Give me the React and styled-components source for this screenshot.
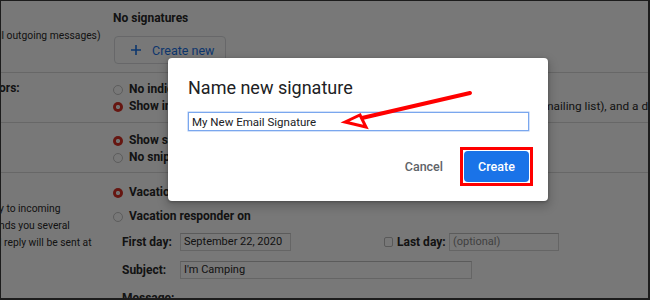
import styled, { createGlobalStyle } from 'styled-components';

const GlobalStyle = createGlobalStyle`
  html, body {
    margin: 0;
    padding: 0;
    background: #fff;
  }
  body {
    font-family: Roboto, "Liberation Sans", Arial, sans-serif;
    overflow: hidden;
  }
`;

const Frame = styled.div`
  position: relative;
  width: 650px;
  height: 300px;
  box-sizing: border-box;
  border-style: solid;
  border-color: #1c1c1c;
  border-width: 1px 2px 2px 1px;
  overflow: hidden;
  background: #fff;
  color: #2a2a2a;
  font-size: 12px;
`;

// ---- settings page behind the modal ----

const Row = styled.section`
  display: grid;
  grid-template-columns: 112px 1fr;
  padding: ${p => p.$pad};
  border-bottom: ${p => (p.$last ? 'none' : '1px solid #dadada')};
`;

const LabelCol = styled.div`
  display: flex;
  flex-direction: column;
  margin: ${p => p.$shift || 0}px 0 0 -2px;
  line-height: 17px;
  white-space: nowrap;
  overflow: visible;
`;

const LabelLine = styled.span`
  min-height: 17px;
  font-size: ${p => (p.$bold ? 12 : 10.3)}px;
  font-weight: ${p => (p.$bold ? 700 : 400)};
`;

const Content = styled.div`
  display: flex;
  flex-direction: column;
  align-items: flex-start;
  min-width: 0;
  line-height: 17px;
  white-space: nowrap;
`;

const Heading = styled.div`
  font-weight: 700;
`;

const CreateNew = styled.button`
  display: inline-flex;
  align-items: center;
  gap: 11px;
  box-sizing: border-box;
  width: 112px;
  height: 28px;
  margin: 9px 0 0 1px;
  padding: 0 0 0 16px;
  border: 1px solid #dadce0;
  border-radius: 4px;
  background: #fff;
  color: #1a73e8;
  font-family: Roboto, "Liberation Sans", Arial, sans-serif;
  font-size: 12.5px;
`;

const Option = styled.div`
  display: flex;
  align-items: center;
  gap: 6px;
  margin-top: ${p => p.$gap || 0}px;
`;

const Radio = styled.span`
  box-sizing: border-box;
  width: 10px;
  height: 10px;
  border-radius: 50%;
  border: ${p => (p.$checked ? 'none' : '1px solid #c4c4c4')};
  background: ${p =>
    p.$checked
      ? 'radial-gradient(circle, #f2f2f2 0 1.8px, #d93025 2.4px)'
      : '#fff'};
`;

const Describe = styled.span`
  font-size: 11.8px;
`;

const Strong = styled.b`
  font-size: 12px;
  font-weight: 700;
`;

const Form = styled.div`
  display: flex;
  flex-direction: column;
  gap: 10px;
  margin: 8px 0 0 9px;
`;

const FormRow = styled.div`
  display: flex;
  align-items: center;
  height: 18px;
`;

const FieldLabel = styled.span`
  width: ${p => p.$w || 58}px;
  margin-left: ${p => p.$ml || 0}px;
  font-weight: 700;
`;

const Field = styled.div`
  box-sizing: border-box;
  width: ${p => p.$w}px;
  height: 18px;
  padding: 0 3px;
  border: 1px solid #d6d6d6;
  border-top-color: #c2c2c2;
  font-size: 11px;
  line-height: 16px;
  color: ${p => (p.$muted ? '#8a8a8a' : '#2a2a2a')};
`;

const Checkbox = styled.span`
  box-sizing: border-box;
  width: 9px;
  height: 10px;
  margin-left: 93px;
  border: 1px solid #bdbdbd;
  border-radius: 2px;
  background: #fff;
`;

const Scrim = styled.div`
  position: absolute;
  inset: 0;
  background: rgba(0, 0, 0, 0.53);
`;

// ---- modal ----

const Dialog = styled.div`
  position: absolute;
  left: 167px;
  top: 57px;
  width: 380px;
  box-sizing: border-box;
  padding: 18px 19px 19px 20px;
  background: #fff;
  border-radius: 4px;
  box-shadow: 0 1px 3px rgba(0, 0, 0, 0.3), 0 4px 8px 3px rgba(0, 0, 0, 0.15);
`;

const Title = styled.h2`
  margin: 0 0 12px;
  font-size: 18px;
  line-height: 24px;
  font-weight: 400;
  color: #202124;
`;

const NameInput = styled.input`
  display: block;
  box-sizing: border-box;
  width: 100%;
  height: 19px;
  margin: 0;
  padding: 0 3px;
  border: 1px solid #7aa7ee;
  box-shadow: 0 0 0 0.5px #a9c6f4;
  border-radius: 0;
  outline: none;
  font-family: Roboto, "Liberation Sans", Arial, sans-serif;
  font-size: 11.5px;
  color: #202124;
`;

const Actions = styled.div`
  display: flex;
  justify-content: flex-end;
  align-items: center;
  gap: 13px;
  margin-top: 20px;
`;

const TextButton = styled.button`
  height: 31px;
  padding: 0 8px;
  border: none;
  background: transparent;
  color: #5f6368;
  font-family: Roboto, "Liberation Sans", Arial, sans-serif;
  font-size: 12.5px;
  font-weight: 500;
`;

const Marked = styled.span`
  position: relative;
  display: inline-flex;

  &::after {
    content: '';
    position: absolute;
    inset: -4px;
    border: 3px solid #ff0000;
  }
`;

const PrimaryButton = styled.button`
  width: 65px;
  height: 31px;
  padding: 0;
  border: none;
  border-radius: 4px;
  background: #1a73e8;
  color: #fff;
  font-family: Roboto, "Liberation Sans", Arial, sans-serif;
  font-size: 12.5px;
  font-weight: 500;
`;

const Overlay = styled.svg`
  position: absolute;
  left: 0;
  top: 0;
  pointer-events: none;
`;

const PlusIcon = () => (
  <svg width="10" height="10" viewBox="0 0 10 10">
    <path d="M5 0v10M0 5h10" stroke="currentColor" strokeWidth="1.6" fill="none" />
  </svg>
);

export default function App() {
  return (
    <Frame>
      <GlobalStyle />

      <Row $pad="9px 0 8px">
        <LabelCol>
          <LabelLine $bold>&nbsp;</LabelLine>
          <LabelLine>ll outgoing messages)</LabelLine>
        </LabelCol>
        <Content>
          <Heading>No signatures</Heading>
          <CreateNew>
            <PlusIcon />
            Create new
          </CreateNew>
        </Content>
      </Row>

      <Row $pad="8px 0 7px">
        <LabelCol $shift={-1}>
          <LabelLine $bold>ors:</LabelLine>
        </LabelCol>
        <Content>
          <Option>
            <Radio />
            <Strong>No indicators</Strong>
          </Option>
          <Option>
            <Radio $checked />
            <Describe>
              <Strong>Show indicators</Strong> - Display an arrow ( › ) by messages sent to my address (not a mailing list), and a double arrow ( » ) by messages sent only to me.
            </Describe>
          </Option>
        </Content>
      </Row>

      <Row $pad="9px 0 6px">
        <LabelCol />
        <Content>
          <Option>
            <Radio $checked />
            <Describe>
              <Strong>Show snippets</Strong> - Show snippets of the message (like Google web search!).
            </Describe>
          </Option>
          <Option>
            <Radio />
            <Describe>
              <Strong>No snippets</Strong> - Show subject only.
            </Describe>
          </Option>
        </Content>
      </Row>

      <Row $pad="11px 0 0" $last>
        <LabelCol $shift={-1}>
          <LabelLine $bold>&nbsp;</LabelLine>
          <LabelLine>y to incoming</LabelLine>
          <LabelLine>nds you several</LabelLine>
          <LabelLine>l reply will be sent at</LabelLine>
        </LabelCol>
        <Content>
          <Option>
            <Radio $checked />
            <Strong>Vacation responder off</Strong>
          </Option>
          <Option $gap={7}>
            <Radio />
            <Strong>Vacation responder on</Strong>
          </Option>
          <Form>
            <FormRow>
              <FieldLabel>First day:</FieldLabel>
              <Field $w={111}>September 22, 2020</Field>
              <Checkbox />
              <FieldLabel $w={52} $ml={4}>Last day:</FieldLabel>
              <Field $w={110} $muted>(optional)</Field>
            </FormRow>
            <FormRow>
              <FieldLabel>Subject:</FieldLabel>
              <Field $w={292}>I'm Camping</Field>
            </FormRow>
            <FormRow>
              <FieldLabel>Message:</FieldLabel>
            </FormRow>
          </Form>
        </Content>
      </Row>

      <Scrim />

      <Dialog>
        <Title>Name new signature</Title>
        <NameInput readOnly value="My New Email Signature" />
        <Actions>
          <TextButton>Cancel</TextButton>
          <Marked>
            <PrimaryButton>Create</PrimaryButton>
          </Marked>
        </Actions>
      </Dialog>

      <Overlay width="650" height="300" viewBox="0 0 650 300">
        <line x1="469" y1="92" x2="361" y2="117" stroke="#ff0000" strokeWidth="4" strokeLinecap="round" />
        <polygon points="344,121 359,114 365,126" fill="#fff" stroke="#ff0000" strokeWidth="3" strokeLinejoin="miter" />
      </Overlay>
    </Frame>
  );
}
